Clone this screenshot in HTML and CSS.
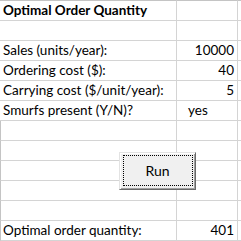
FILE: index.html
```html
<!DOCTYPE html>
<html>
<head>
<meta charset="utf-8">
<link rel="stylesheet" href="styles.css">
</head>
<body>
<div class="sheet">
  <div class="cell a top bold">Optimal Order Quantity</div><div class="cell b top"></div><div class="cell c top"></div>
  <div class="cell a"></div><div class="cell b"></div><div class="cell c"></div>
  <div class="cell a">Sales (units/year):</div><div class="cell b num">10000</div><div class="cell c"></div>
  <div class="cell a">Ordering cost ($):</div><div class="cell b num">40</div><div class="cell c"></div>
  <div class="cell a">Carrying cost ($/unit/year):</div><div class="cell b num">5</div><div class="cell c"></div>
  <div class="cell a">Smurfs present (Y/N)?</div><div class="cell b txt">yes</div><div class="cell c"></div>
  <div class="cell a edge"></div><div class="cell b"></div><div class="cell c"></div>
  <div class="cell a edge"></div><div class="cell b"></div><div class="cell c"></div>
  <div class="cell a edge"></div><div class="cell b"></div><div class="cell c"></div>
  <div class="cell a edge"></div><div class="cell b"></div><div class="cell c"></div>
  <div class="cell a edge"></div><div class="cell b"></div><div class="cell c"></div>
  <div class="cell a edge">Optimal order quantity:</div><div class="cell b num">401</div><div class="cell c"></div>
  <button class="run"><span class="focus"></span>Run</button>
</div>
</body>
</html>
```
FILE: styles.css
```css
html, body {
  margin: 0;
  padding: 0;
  background: #fff;
}
body {
  width: 241px;
  height: 241px;
  overflow: hidden;
}
.sheet {
  position: relative;
  display: grid;
  grid-template-columns: 177px 61px 3px;
  grid-template-rows: 21px;
  grid-auto-rows: 20px;
  font-family: Lato, "Liberation Sans", sans-serif;
  font-size: 13.5px;
  color: #000;
}
.cell {
  box-sizing: border-box;
  border-right: 1px solid #d4d4d4;
  border-bottom: 1px solid #d4d4d4;
  white-space: nowrap;
  display: flex;
  align-items: flex-end;
  padding: 0 3px 2px 3px;
  line-height: 16px;
}
.cell.top {
  border-top: 1px solid #c4c4c4;
}
.cell.edge {
  border-left: 1px solid #c4c4c4;
  padding-left: 2px;
}
.cell.c {
  border-right: none;
  padding: 0;
}
.bold {
  font-weight: bold;
}
.num {
  justify-content: flex-end;
}
.txt {
  padding-left: 11px;
}
.run {
  position: absolute;
  left: 119px;
  top: 152px;
  width: 77px;
  height: 38px;
  margin: 0;
  padding: 0;
  box-sizing: border-box;
  background: #f0f0f0;
  border: 1px solid;
  border-color: #e3e3e3 #696969 #696969 #e3e3e3;
  box-shadow: inset 1px 1px 0 #ffffff, inset -1px -1px 0 #a0a0a0;
  font-family: Lato, "Liberation Sans", sans-serif;
  font-size: 14px;
  color: #000;
  line-height: 36px;
  text-align: center;
}
.focus {
  position: absolute;
  left: 3px;
  top: 2px;
  right: 2px;
  bottom: 3px;
  border: 1px dotted #000;
}
```
